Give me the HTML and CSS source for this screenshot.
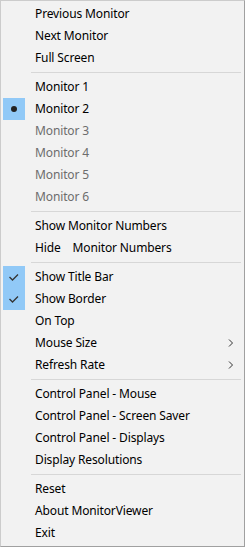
FILE: index.html
```html
<!DOCTYPE html>
<html>
<head>
  <meta charset="UTF-8" />
  <title>MonitorViewer Menu</title>
<link rel="stylesheet" href="styles.css">
</head>
<body>

<ul class="context-menu">
  <li class="menu-item"><span class="mark"></span><span class="label">Previous Monitor</span></li>
  <li class="menu-item"><span class="mark"></span><span class="label">Next Monitor</span></li>
  <li class="menu-item"><span class="mark"></span><span class="label">Full Screen</span></li>
  <li class="menu-sep"></li>
  <li class="menu-item"><span class="mark"></span><span class="label">Monitor 1</span></li>
  <li class="menu-item"><span class="mark checked"><span class="radio-dot"></span></span><span class="label">Monitor 2</span></li>
  <li class="menu-item disabled"><span class="mark"></span><span class="label">Monitor 3</span></li>
  <li class="menu-item disabled"><span class="mark"></span><span class="label">Monitor 4</span></li>
  <li class="menu-item disabled"><span class="mark"></span><span class="label">Monitor 5</span></li>
  <li class="menu-item disabled"><span class="mark"></span><span class="label">Monitor 6</span></li>
  <li class="menu-sep"></li>
  <li class="menu-item"><span class="mark"></span><span class="label">Show Monitor Numbers</span></li>
  <li class="menu-item"><span class="mark"></span><span class="label">Hide&nbsp;&nbsp;&nbsp; Monitor Numbers</span></li>
  <li class="menu-sep"></li>
  <li class="menu-item"><span class="mark checked">
    <svg width="22" height="22" viewBox="0 0 22 22"><polyline points="6.5,11 9.5,14 15,8.5" fill="none" stroke="#333" stroke-width="1.3"/></svg>
  </span><span class="label">Show Title Bar</span></li>
  <li class="menu-item"><span class="mark checked">
    <svg width="22" height="22" viewBox="0 0 22 22"><polyline points="6.5,11 9.5,14 15,8.5" fill="none" stroke="#333" stroke-width="1.3"/></svg>
  </span><span class="label">Show Border</span></li>
  <li class="menu-item"><span class="mark"></span><span class="label">On Top</span></li>
  <li class="menu-item"><span class="mark"></span><span class="label">Mouse Size</span>
    <svg class="sub-arrow" width="22" height="22" viewBox="0 0 22 22"><polyline points="9,7.5 12.5,11 9,14.5" fill="none" stroke="#333" stroke-width="1"/></svg></li>
  <li class="menu-item"><span class="mark"></span><span class="label">Refresh Rate</span>
    <svg class="sub-arrow" width="22" height="22" viewBox="0 0 22 22"><polyline points="9,7.5 12.5,11 9,14.5" fill="none" stroke="#333" stroke-width="1"/></svg></li>
  <li class="menu-sep"></li>
  <li class="menu-item"><span class="mark"></span><span class="label">Control Panel - Mouse</span></li>
  <li class="menu-item"><span class="mark"></span><span class="label">Control Panel - Screen Saver</span></li>
  <li class="menu-item"><span class="mark"></span><span class="label">Control Panel - Displays</span></li>
  <li class="menu-item"><span class="mark"></span><span class="label">Display Resolutions</span></li>
  <li class="menu-sep"></li>
  <li class="menu-item"><span class="mark"></span><span class="label">Reset</span></li>
  <li class="menu-item"><span class="mark"></span><span class="label">About MonitorViewer</span></li>
  <li class="menu-item"><span class="mark"></span><span class="label">Exit</span></li>
</ul>

</body>
</html>
```

FILE: styles.css
```css
body {
  margin: 0;
  background: #f2f2f2;
}

.context-menu {
  list-style: none;
  margin: 0;
  padding: 2px;
  width: 245px;
  height: 547px;
  box-sizing: border-box;
  background: #f2f2f2;
  border: 1px solid #cccccc;
  border-right-color: #a0a0a0;
  border-bottom-color: #a0a0a0;
  font-family: "Noto Sans", "Liberation Sans", sans-serif;
  font-size: 12px;
  letter-spacing: -0.13px;
  color: #000;
}

.menu-item {
  display: flex;
  align-items: center;
  height: 22px;
  line-height: 22px;
}

.menu-item.disabled {
  color: #6d6d6d;
}

.mark {
  width: 22px;
  height: 22px;
  flex: none;
  display: flex;
  align-items: center;
  justify-content: center;
}

.mark.checked {
  background: #91c9f7;
}

.radio-dot {
  width: 6px;
  height: 6px;
  border-radius: 50%;
  background: #222;
}

.label {
  flex: 1;
  padding-left: 10px;
  white-space: pre;
}

.sub-arrow {
  flex: none;
}

.menu-sep {
  height: 7px;
  display: flex;
  align-items: center;
  padding-left: 28px;
  padding-right: 1px;
}

.menu-sep::before {
  content: "";
  flex: 1;
  height: 1px;
  background: #d7d7d7;
}
```
